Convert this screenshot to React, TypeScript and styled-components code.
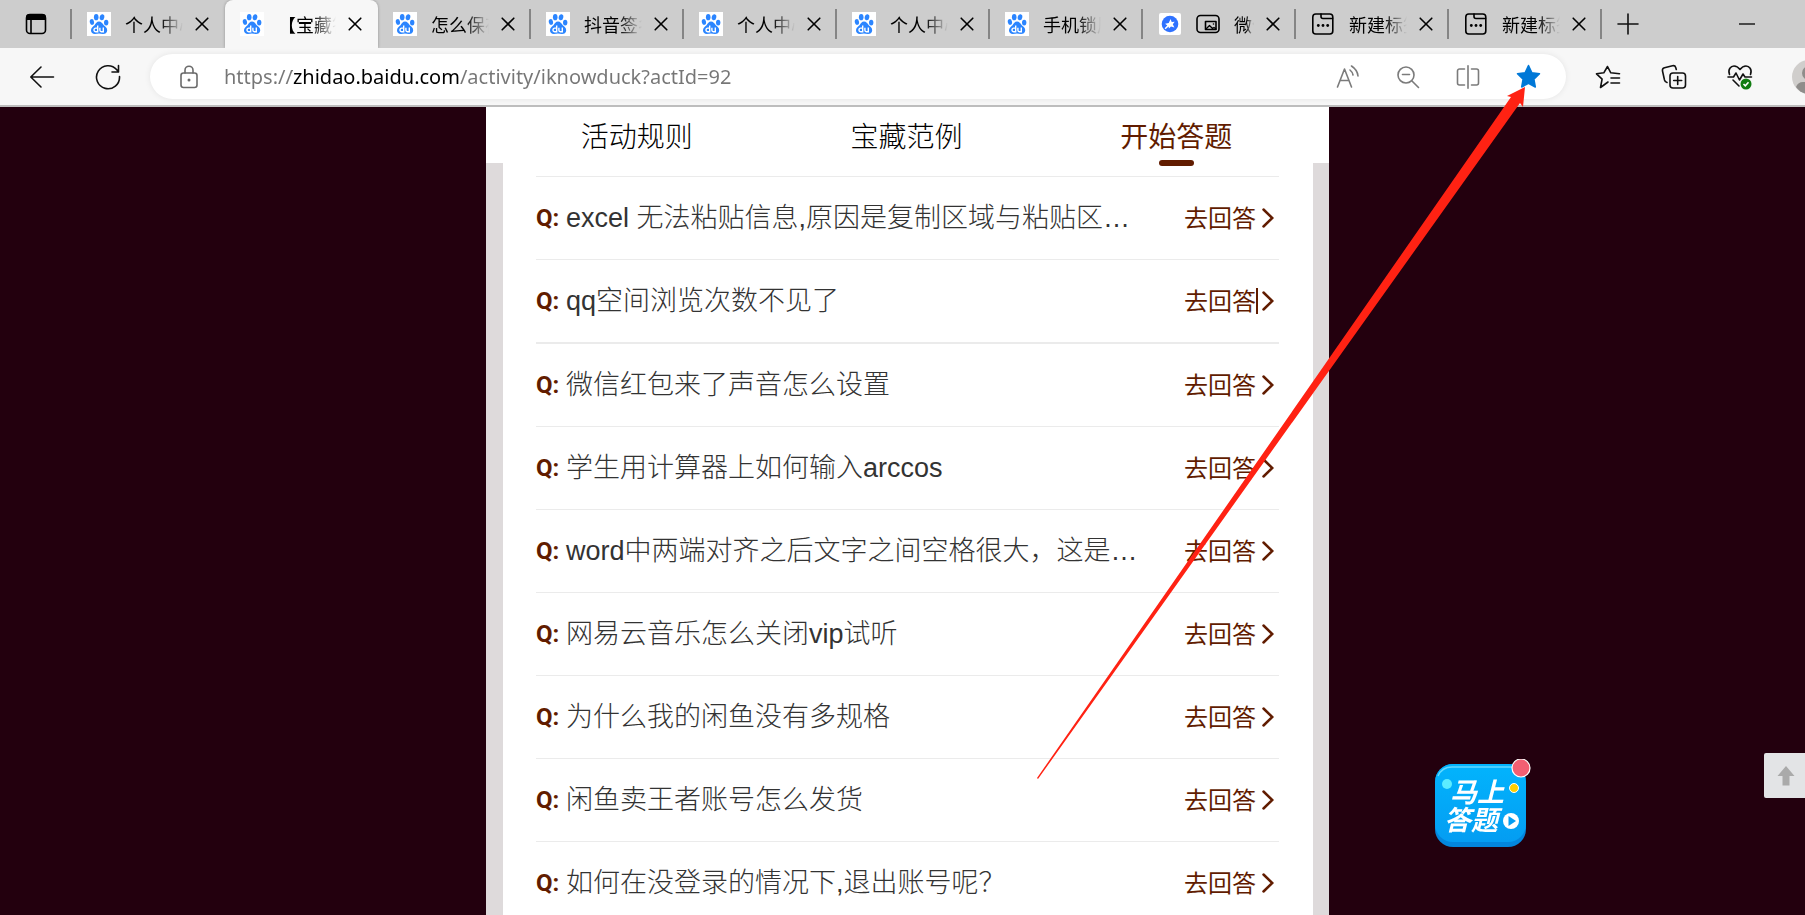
import React from "react";
import styled, { createGlobalStyle, css } from "styled-components";

const cjk = '"Noto Sans CJK SC", sans-serif';
const maroon = "#611c00";

const GlobalStyle = createGlobalStyle`
  * { box-sizing: border-box; }
  body { margin: 0; overflow: hidden; font-family: "Liberation Sans", ${cjk}; }
  button { border: 0; padding: 0; background: none; color: inherit; font: inherit; cursor: pointer; }
  svg { display: block; flex: none; }
  ul { list-style: none; margin: 0; padding: 0; }
`;

const Window = styled.div`
  display: flex;
  flex-direction: column;
  height: 100vh;
  overflow: hidden;
  background: #23000e;
`;

const TabStrip = styled.header`
  display: flex;
  align-items: center;
  flex: none;
  height: 48px;
  background: #cdcdcd;
  overflow: hidden;
`;

const Workspaces = styled.button`
  width: 72px;
  height: 30px;
  padding-left: 25px;
  border-right: 2px solid #858585;
`;

const Tab = styled.div<{ $active?: boolean; $divider: boolean }>`
  position: relative;
  display: flex;
  align-items: center;
  flex: none;
  width: 153px;
  height: 30px;
  padding: 0 14px 0 15px;
  border-right: 2px solid ${(p) => (p.$divider ? "#858585" : "transparent")};
  ${(p) =>
    p.$active &&
    css`
      height: 48px;
      border-color: transparent;
      border-radius: 8px 8px 0 0;
      background: #f7f7f7;
      box-shadow: 0 0 3px rgba(0, 0, 0, 0.3);
    `}
`;

const TabTitle = styled.button`
  flex: 1;
  min-width: 0;
  margin: 0 12px 0 14px;
  overflow: hidden;
  white-space: nowrap;
  text-align: left;
  font: 400 18px/28px ${cjk};
  color: #000;
  mask-image: linear-gradient(90deg, #000 60%, transparent);
`;

const IconButton = styled.button<{ $w: number; $color?: string }>`
  display: flex;
  align-items: center;
  justify-content: center;
  flex: none;
  width: ${(p) => p.$w}px;
  height: 44px;
  color: ${(p) => p.$color ?? "#111"};
`;

const CloseButton = styled.button`
  flex: none;
`;

const Minimise = styled(IconButton)`
  margin-left: auto;
`;

const Toolbar = styled.div`
  display: flex;
  align-items: center;
  flex: none;
  height: 59px;
  padding-left: 9px;
  background: #f7f7f7;
  border-bottom: 2px solid #bdbdbd;
  overflow: hidden;
`;

const AddressBar = styled.div`
  display: flex;
  align-items: center;
  flex: 1;
  min-width: 0;
  height: 45px;
  margin: 0 9px;
  padding: 0 8px 0 30px;
  border-radius: 23px;
  background: #fff;
  box-shadow: 0 0 6px rgba(0, 0, 0, 0.08);
`;

const Address = styled.input`
  flex: 1;
  min-width: 0;
  margin-left: 26px;
  padding: 0;
  border: 0;
  outline: 0;
  font: 20px/30px "Noto Sans", sans-serif;
  color: transparent;
  background: linear-gradient(90deg, #767676 68px, #000 68px, #000 235px, #767676 235px);
  background-clip: text;
`;

const Profile = styled.button`
  flex: none;
  width: 13px;
  margin-left: 19px;
  overflow: hidden;
`;

const Page = styled.main`
  flex: 1;
  min-height: 0;
  display: flex;
  justify-content: center;
  padding-left: 10px;
  overflow: hidden;
`;

const Panel = styled.section`
  width: 843px;
  background: #fff;
`;

const SectionNav = styled.nav`
  display: grid;
  grid-template-columns: repeat(3, 1fr);
  height: 56px;
  padding: 0 18px 0 16px;
`;

const SectionTab = styled.button<{ $active?: boolean }>`
  position: relative;
  font: 300 28px/54px ${cjk};
  color: #000;
  ${(p) =>
    p.$active &&
    css`
      font-weight: 400;
      color: ${maroon};
      &::after {
        content: "";
        position: absolute;
        left: calc(50% - 17px);
        bottom: -3px;
        width: 35px;
        height: 6px;
        border-radius: 3px;
        background: ${maroon};
      }
    `}
`;

const Questions = styled.ul`
  padding: 13px 34px 0 33px;
  border: solid #dedadb;
  border-width: 0 16px 0 17px;
`;

const Question = styled.li`
  display: flex;
  align-items: center;
  height: 83px;
  border-top: 1px solid #ebebeb;
  white-space: nowrap;
  &:nth-child(3) {
    height: 84px;
    border-top-width: 2px;
  }
`;

const QMark = styled.span`
  width: 30px;
  font: 700 24px/40px Roboto, sans-serif;
  color: ${maroon};
`;

const Title = styled.span`
  flex: 1;
  min-width: 0;
  font: 300 27px/40px "Liberation Sans", ${cjk};
  color: #333;
`;

const AnswerLink = styled.a`
  display: flex;
  align-items: center;
  gap: 4px;
  padding-right: 5px;
  font: 400 24px/40px ${cjk};
  color: ${maroon};
  text-decoration: none;
`;

const AnswerText = styled.span<{ $caret: boolean }>`
  border-right: 2px solid ${(p) => (p.$caret ? maroon : "transparent")};
  padding-bottom: 2px;
  line-height: 24px;
`;

const StartButton = styled.button`
  position: fixed;
  right: 272px;
  bottom: 64px;
`;

const TopButton = styled.button`
  position: fixed;
  right: 0;
  bottom: 117px;
  width: 41px;
  height: 45px;
  padding-left: 13px;
  border-radius: 2px 0 0 2px;
  background: #e3e4e6;
`;

const Pointer = styled.svg`
  position: fixed;
  top: 87px;
  right: 280px;
  pointer-events: none;
`;

const line = {
  fill: "none",
  stroke: "currentColor",
  strokeWidth: 1.6,
  strokeLinecap: "round",
  strokeLinejoin: "round",
} as const;

const PawIcon = () => (
  <svg width="24" height="24" viewBox="0 0 24 24">
    <path fill="#fff" d="M0 0h24v24H0z" />
    <g fill="#2b85ff">
      <ellipse cx="9.2" cy="5.2" rx="2.3" ry="3.1" />
      <ellipse cx="15" cy="5.2" rx="2.3" ry="3" transform="rotate(12 15 5.2)" />
      <ellipse cx="4.9" cy="10" rx="2.1" ry="2.9" transform="rotate(-12 4.9 10)" />
      <ellipse cx="19.2" cy="10.6" rx="2.2" ry="2.9" />
      <path d="M12 9.6c2.4 0 3.3 2 4.8 3.6 1.6 1.6 3.6 2.6 3.4 5.2-.2 2.4-2 3.5-4.2 3.5-1.5 0-2.6-.4-4-.4s-2.6.4-4.1.4c-2.2 0-3.8-1.2-3.9-3.5-.1-2.6 2-3.6 3.5-5.2C9 11.6 9.6 9.6 12 9.6z" />
    </g>
    <path
      fill="none"
      stroke="#fff"
      strokeWidth="1.4"
      d="M10.7 13.5v6.2H8.8a1.7 1.7 0 0 1 0-3.6h1.7M12.9 15.7v2.6q0 1.4 1.4 1.4h2v-4.2"
    />
  </svg>
);

const CloudIcon = () => (
  <svg width="24" height="24" viewBox="0 0 24 24">
    <rect x="1" y="1" width="22" height="22" rx="2" fill="#fff" />
    <circle cx="12" cy="12" r="8.3" fill="#2f72ff" />
    <path fill="#fff" d="M12.6 7l1.1 2.9 3-.1-1.900 2.400 1.600 3.200-3.400-1-2.100 2.200-.3-2.200-3 2.800-1-1 2.700-2.800-2.200-1.600 3.600-.8z" />
  </svg>
);

const PipIcon = () => (
  <svg width="24" height="24" viewBox="0 0 24 24">
    <g {...line}>
      <rect x="1" y="3.5" width="22" height="17" rx="3.5" />
      <rect x="9.5" y="9.5" width="10.5" height="8" />
      <path d="m10 17 3.5-3.5 3 3 1.5-1 2 1.5" strokeWidth="1.3" />
    </g>
    <circle cx="17.5" cy="12" r="0.8" />
  </svg>
);

const PageIcon = () => (
  <svg width="24" height="24" viewBox="0 0 24 24">
    <g {...line}>
      <rect x="1.8" y="2" width="20" height="20" rx="3" />
      <path d="M10 2v2.5q0 2 2 2h9.5" />
    </g>
    <circle cx="7.3" cy="13.5" r="1.4" />
    <circle cx="12" cy="13.5" r="1.4" />
    <circle cx="16.7" cy="13.5" r="1.4" />
  </svg>
);

const CloseIcon = () => (
  <svg width="14" height="14" viewBox="0 0 14 14">
    <path {...line} d="M1.2 1.2l11.6 11.6M12.8 1.2 1.2 12.8" />
  </svg>
);

type TabInfo = { title: string; kind: "paw" | "cloud" | "page"; active?: boolean };

const tabs: TabInfo[] = [
  { title: "个人中心", kind: "paw" },
  { title: "【宝藏答", kind: "paw", active: true },
  { title: "怎么保存", kind: "paw" },
  { title: "抖音签名", kind: "paw" },
  { title: "个人中心", kind: "paw" },
  { title: "个人中心", kind: "paw" },
  { title: "手机锁屏", kind: "paw" },
  { title: "微信", kind: "cloud" },
  { title: "新建标签", kind: "page" },
  { title: "新建标签", kind: "page" },
];

const PipBadge = styled.span`
  margin-left: 14px;
`;

const questions = [
  "excel 无法粘贴信息,原因是复制区域与粘贴区…",
  "qq空间浏览次数不见了",
  "微信红包来了声音怎么设置",
  "学生用计算器上如何输入arccos",
  "word中两端对齐之后文字之间空格很大，这是…",
  "网易云音乐怎么关闭vip试听",
  "为什么我的闲鱼没有多规格",
  "闲鱼卖王者账号怎么发货",
  "如何在没登录的情况下,退出账号呢？",
];

export default function App() {
  return (
    <Window>
      <GlobalStyle />
      <TabStrip>
        <Workspaces aria-label="工作区">
          <svg width="22" height="22" viewBox="0 0 22 22">
            <rect {...line} x="1.5" y="1.5" width="19" height="19" rx="3.5" />
            <path d="M1 7V4a3 3 0 0 1 3-3h14a3 3 0 0 1 3 3v3z" />
            <path {...line} d="M6 7v13" />
          </svg>
        </Workspaces>
        {tabs.map((t, i) => (
          <Tab key={i} $active={t.active} $divider={!tabs[i + 1]?.active}>
            {t.kind === "paw" ? <PawIcon /> : t.kind === "cloud" ? <CloudIcon /> : <PageIcon />}
            {t.kind === "cloud" && (
              <PipBadge>
                <PipIcon />
              </PipBadge>
            )}
            <TabTitle>{t.title}</TabTitle>
            <CloseButton aria-label="关闭标签页">
              <CloseIcon />
            </CloseButton>
          </Tab>
        ))}
        <IconButton $w={52} aria-label="新建标签页">
          <svg width="22" height="22" viewBox="0 0 22 22">
            <path {...line} d="M11 1v20M1 11h20" />
          </svg>
        </IconButton>
        <Minimise $w={116} aria-label="最小化">
          <svg width="16" height="2" viewBox="0 0 16 2">
            <path stroke="#111" strokeWidth="1.4" d="M0 1h16" />
          </svg>
        </Minimise>
      </TabStrip>

      <Toolbar>
        <IconButton $w={66} aria-label="返回">
          <svg width="26" height="24" viewBox="0 0 26 24">
            <path {...line} d="M24.5 12H2M12 2 1.8 12 12 22" />
          </svg>
        </IconButton>
        <IconButton $w={66} aria-label="刷新">
          <svg width="26" height="26" viewBox="0 0 26 26">
            <path {...line} d="M24.5 12.5A11.5 11.5 0 1 1 21.8 5.8L23.500 8M23.5 1.5v6.5h-6.5" />
          </svg>
        </IconButton>
        <AddressBar>
          <svg width="18" height="24" viewBox="0 0 18 24" color="#6b6b6b">
            <rect {...line} x="1" y="8" width="16" height="14.5" rx="2.5" />
            <path {...line} d="M5 8V5.2a4 4 0 0 1 8 0V8" />
            <circle cx="9" cy="15" r="1.5" fill="#6b6b6b" />
          </svg>
          <Address aria-label="地址" defaultValue="https://zhidao.baidu.com/activity/iknowduck?actId=92" />
          <IconButton $w={60} $color="#7b7b7b" aria-label="朗读">
            <svg width="24" height="24" viewBox="0 0 24 24">
              <path {...line} d="M1.5 22 8.5 4l7 18M4 15.5h9M14 5q2.5 2 3 5M15.5 1q6 4 6.5 10" />
            </svg>
          </IconButton>
          <IconButton $w={60} $color="#7b7b7b" aria-label="缩小">
            <svg width="24" height="24" viewBox="0 0 24 24">
              <circle {...line} cx="10" cy="10" r="8" />
              <path {...line} d="m16 16 6.5 6.5M6.5 9.5h7" />
            </svg>
          </IconButton>
          <IconButton $w={60} $color="#7b7b7b" aria-label="分屏">
            <svg width="24" height="24" viewBox="0 0 24 24">
              <path {...line} d="M12 .8v22.4M8.5 4h-5a2 2 0 0 0-2 2v12a2 2 0 0 0 2 2h5M15.5 4h5a2 2 0 0 1 2 2v12a2 2 0 0 1-2 2h-5" />
            </svg>
          </IconButton>
          <IconButton $w={60} $color="#0078d7" aria-label="收藏">
            <svg width="25" height="25" viewBox="0 0 25 25">
              <path
                d="M12.5 1.5l3.4 7.2 7.6 1-5.6 5.4 1.4 7.9-6.8-3.7L5.7 23l1.4-7.9L1.5 9.7l7.6-1z"
                fill="currentColor"
                stroke="currentColor"
                strokeLinejoin="round"
                strokeWidth="1.5"
              />
            </svg>
          </IconButton>
        </AddressBar>
        <IconButton $w={66} aria-label="收藏夹">
          <svg width="26" height="24" viewBox="0 0 26 24">
            <path {...line} d="M13 17 5.5 22.5l1.6-8.3L1.5 8.8l7.3-1L12.5 1.5l3.3 6.3 8.7.9M16 13h8.5M16 18h8.5" />
          </svg>
        </IconButton>
        <IconButton $w={66} aria-label="集锦">
          <svg width="26" height="26" viewBox="0 0 26 26">
            <rect {...line} x="9" y="9" width="15.5" height="15" rx="3" />
            <path {...line} d="M16.7 12.5v8M12.7 16.5h8M6 18.5q-2-.5-2.5-2.5L1.5 7q-.5-2.5 2-3.2l8-2q2.5-.6 3.2 1.7l.6 2" />
          </svg>
        </IconButton>
        <IconButton $w={66} aria-label="浏览器概要">
          <svg width="26" height="26" viewBox="0 0 26 26">
            <path {...line} d="M2.5 10.5C.5 5 4 2 7 2c3 0 4.500 1.500 6 3.500C14.500 3.500 16 2 19 2c3 0 6.500 3 4.500 8.500M1 13h5.500l2.500-4 3.500 7 3.500-6 2 3h6.500M6 16l6 6" />
            <circle cx="19" cy="20" r="5.5" fill="#107c10" />
            <path fill="none" stroke="#fff" strokeWidth="1.6" d="m16.5 20 1.8 1.8 3.2-3.5" />
          </svg>
        </IconButton>
        <Profile aria-label="个人资料">
          <svg width="34" height="34" viewBox="0 0 34 34">
            <circle cx="17" cy="17" r="17" fill="#d0cecc" />
            <circle cx="17" cy="13" r="7" fill="#8f8d8b" />
            <path d="M4 27q2-5 7-5h12q5 0 7 5-5 7-13 7T4 27z" fill="#8f8d8b" />
          </svg>
        </Profile>
      </Toolbar>

      <Page>
        <Panel>
          <SectionNav>
            <SectionTab>活动规则</SectionTab>
            <SectionTab>宝藏范例</SectionTab>
            <SectionTab $active>开始答题</SectionTab>
          </SectionNav>
          <Questions>
            {questions.map((q, i) => (
              <Question key={q}>
                <QMark>Q:</QMark>
                <Title>{q}</Title>
                <AnswerLink href="#">
                  <AnswerText $caret={i === 1}>去回答</AnswerText>
                  <svg width="12" height="20" viewBox="0 0 12 20">
                    <path fill="none" stroke={maroon} strokeWidth="2.5" strokeLinecap="round" d="m1.5 1.5 8.8 8.5-8.8 8.5" />
                  </svg>
                </AnswerLink>
              </Question>
            ))}
          </Questions>
        </Panel>
      </Page>

      <StartButton>
        <svg width="100" height="92" viewBox="0 0 100 92">
          <defs>
            <linearGradient id="face" x1="0" y1="0" x2="0" y2="1">
              <stop offset="0" stopColor="#02b4fd" />
              <stop offset="1" stopColor="#049df2" />
            </linearGradient>
          </defs>
          <rect x="2" y="5" width="91" height="83" rx="18" fill="#0386dd" />
          <rect x="2" y="5" width="91" height="78" rx="18" fill="url(#face)" />
          <path d="M5 17Q9 8 19 8h60" fill="none" stroke="#63d9ff" strokeWidth="1.5" />
          <circle cx="14" cy="25" r="5" fill="#5cecff" />
          <circle cx="81" cy="29" r="4.5" fill="#ffcf00" stroke="#fff" />
          <g fill="#fff" fontFamily='"Noto Sans CJK SC", sans-serif' fontWeight="700" fontStyle="italic" fontSize="27">
            <text x="17" y="43">马上</text>
            <text x="11" y="71">答题</text>
          </g>
          <circle cx="78" cy="62" r="8" fill="#fff" />
          <path d="m75.5 57 7.5 5-7.5 5z" fill="#049df2" />
          <circle cx="88" cy="9" r="9" fill="#f25f72" stroke="#fff" strokeWidth="1.2" />
        </svg>
      </StartButton>
      <TopButton aria-label="返回顶部">
        <svg width="18" height="20" viewBox="0 0 18 20">
          <path d="M9 0l8.5 10h-5v9.5h-7V10h-5z" fill="#aaa" />
        </svg>
      </TopButton>
      <Pointer width="488" height="692" viewBox="0 0 488 692" aria-hidden="true">
        <path d="M488 0 470 9l4 1L0 691l1 1L483 16l3 4z" fill="#ff2213" />
      </Pointer>
    </Window>
  );
}
